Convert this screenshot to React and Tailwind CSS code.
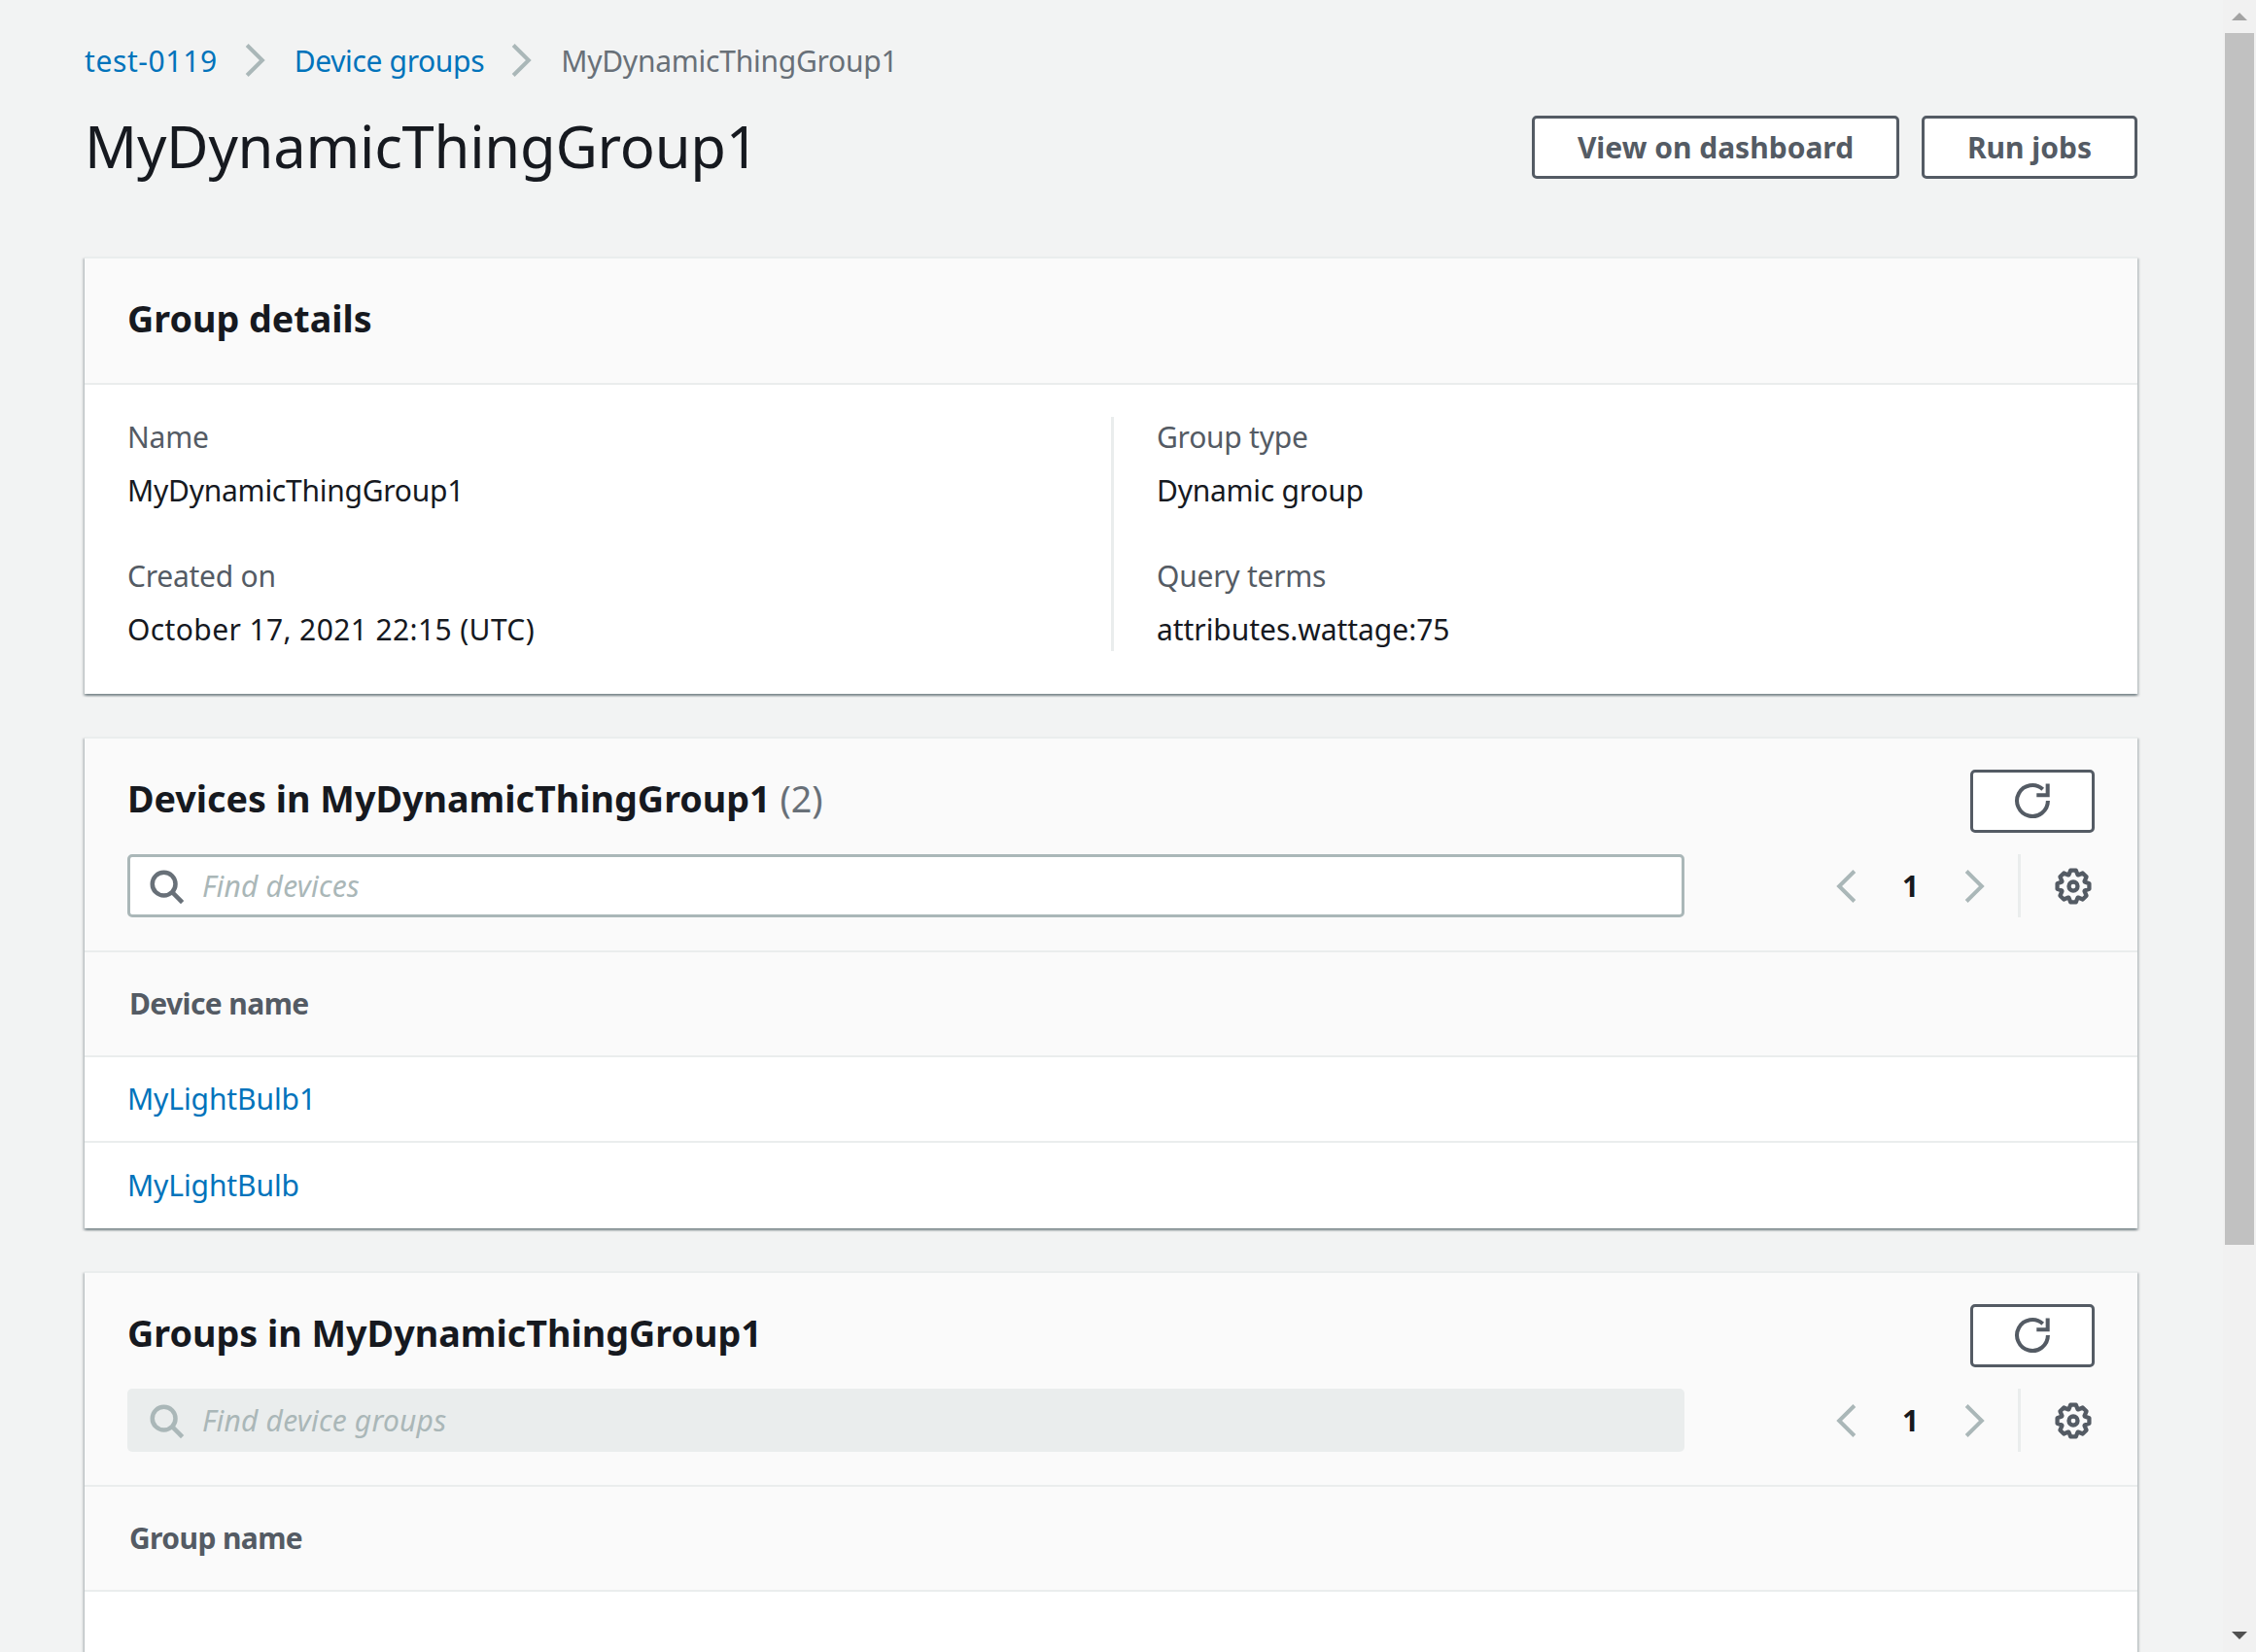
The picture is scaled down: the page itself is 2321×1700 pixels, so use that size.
const gearPath = (() => {
  const teeth = 8;
  const pts = [];
  for (let i = 0; i < teeth; i++) {
    const a = (i / teeth) * Math.PI * 2 - Math.PI / 2;
    const w = Math.PI / teeth;
    [[-w * 0.95, 5.3], [-w * 0.42, 7], [w * 0.42, 7], [w * 0.95, 5.3]].forEach(([d, r]) => {
      pts.push(`${(8 + Math.cos(a + d) * r).toFixed(2)} ${(8 + Math.sin(a + d) * r).toFixed(2)}`);
    });
  }
  return "M" + pts.join("L") + "Z";
})();

function Icon({ className = "", children }) {
  return (
    <svg viewBox="0 0 16 16" fill="none" stroke="currentColor" strokeWidth="1.7" className={`w-[38px] h-[38px] shrink-0 ${className}`}>
      {children}
    </svg>
  );
}
const ChevronRight = ({ className }) => <Icon className={className}><path d="M4.7 1.5L11.3 8l-6.6 6.5" /></Icon>;
const ChevronLeft = ({ className }) => <Icon className={className}><path d="M11.3 1.5L4.7 8l6.6 6.5" /></Icon>;
const Refresh = () => (
  <Icon className="text-[#545b64]">
    <path d="M14.6 0.6V5.6H9.8" />
    <path d="M12.5 3.05A6.7 6.7 0 1 0 14.7 8" />
  </Icon>
);
const Gear = () => (
  <Icon className="text-[#545b64]">
    <path d={gearPath} strokeLinejoin="round" strokeWidth="1.8" />
    <circle cx="8" cy="8" r="1.9" strokeWidth="1.8" />
  </Icon>
);
const Search = ({ className }) => (
  <Icon className={className}>
    <circle cx="7" cy="7" r="5" strokeWidth="1.9" />
    <path d="M10.7 10.7L15 15" strokeWidth="1.9" />
  </Icon>
);

function Btn({ children, className = "" }) {
  return (
    <button className={`h-[65px] border-[3px] border-[#545b64] rounded-[5px] bg-white text-[#545b64] font-bold tracking-normal flex items-center justify-center ${className}`}>
      {children}
    </button>
  );
}

function Field({ label, value, valueClass = "" }) {
  return (
    <div className="flex flex-col">
      <div className="h-[36px] leading-[36px] text-[#545b64]">{label}</div>
      <div className={`h-[36px] leading-[36px] mt-[19px] text-[#16191f] ${valueClass}`}>{value}</div>
    </div>
  );
}

function Pager() {
  return (
    <div className="flex items-center mr-[3px]">
      <ChevronLeft className="text-[#aab7b8]" />
      <div className="w-[93px] text-center font-bold text-[#16191f]">1</div>
      <ChevronRight className="text-[#aab7b8]" />
      <div className="w-[3px] h-[65px] bg-[#eaeded] ml-[26px] mr-[35px]" />
      <Gear />
    </div>
  );
}

function TableCard({ title, count, placeholder, disabled, column, rows }) {
  return (
    <section className="bg-white border-t-2 border-[#eaeded] shadow-[0_2px_2px_0_rgba(0,28,36,0.3),2px_2px_2px_0_rgba(0,28,36,0.15),-2px_2px_2px_0_rgba(0,28,36,0.15)]">
      <div className="bg-[#fafafa] px-[44px] pt-[31px] pb-[34px] border-b-2 border-[#eaeded]">
        <div className="flex items-center justify-between h-[66px]">
          <h2 className="text-[37.7px] pb-[3px] font-bold tracking-normal text-[#16191f]">
            {title}
            {count && <span className="font-normal text-[#687078]"> {count}</span>}
          </h2>
          <Btn className="w-[128px]"><Refresh /></Btn>
        </div>
        <div className="flex items-center justify-between mt-[22px]">
          <div className={`w-[1602px] h-[65px] rounded-[5px] flex items-center ${disabled ? "pl-[21px] bg-[#eaeded]" : "pl-[18px] bg-white border-[3px] border-[#aab7b8]"}`}>
            <Search className={disabled ? "text-[#aab7b8]" : "text-[#687078]"} />
            <span className="ml-[18px] italic tracking-[0.2px] text-[#aab7b8]">{placeholder}</span>
          </div>
          <Pager />
        </div>
      </div>
      <div className="bg-[#fafafa] h-[108px] pb-[2px] flex items-center px-[46px] font-bold tracking-[-0.6px] text-[#545b64] border-b-2 border-[#eaeded]">
        {column}
      </div>
      {rows.map((r, i) => (
        <div key={r} className={`h-[88px] pb-[2px] flex items-center px-[44px] tracking-[-0.1px] text-[#0073bb] ${i < rows.length - 1 ? "border-b-2 border-[#eaeded]" : ""}`}>
          {r}
        </div>
      ))}
    </section>
  );
}

function Scrollbar() {
  return (
    <div className="w-[34px] h-full bg-[#f1f1f1] flex flex-col items-center shrink-0">
      <div className="h-[34px] flex items-center justify-center">
        <div className="w-0 h-0 border-x-[8px] border-x-transparent border-b-[8px] border-b-[#a3a3a3]" />
      </div>
      <div className="w-[30px] h-[1247px] bg-[#c1c1c1]" />
      <div className="flex-1 flex items-end justify-center pb-[13px]">
        <div className="w-0 h-0 border-x-[8px] border-x-transparent border-t-[8px] border-t-[#505050]" />
      </div>
    </div>
  );
}

export default function App() {
  return (
    <div className="w-[2321px] h-[1700px] overflow-hidden flex bg-[#f2f3f3] text-[30px] tracking-[-0.25px] font-['Noto_Sans',sans-serif]">
      <main className="flex-1 pl-[87px] pr-[88px] h-full overflow-hidden">
        <nav className="flex items-center pt-[43px] pb-[2px] h-[83px] text-[#0073bb]">
          <span className="tracking-[0.6px]">test-0119</span>
          <ChevronRight className="text-[#aab7b8] ml-[19px] mr-[22px]" />
          <span className="tracking-[-0.35px]">Device groups</span>
          <ChevronRight className="text-[#aab7b8] ml-[19px] mr-[22px]" />
          <span className="text-[#687078]">MyDynamicThingGroup1</span>
        </nav>
        <header className="flex items-center justify-between mt-[36px] mb-[80px] h-[65px]">
          <h1 className="text-[59.7px] pb-[4px] text-[#16191f]">MyDynamicThingGroup1</h1>
          <div className="flex gap-[23px]">
            <Btn className="w-[378px]">View on dashboard</Btn>
            <Btn className="w-[222px]">Run jobs</Btn>
          </div>
        </header>
        <div className="flex flex-col gap-[44px]">
          <section className="bg-white border-t-2 border-[#eaeded] shadow-[0_2px_2px_0_rgba(0,28,36,0.3),2px_2px_2px_0_rgba(0,28,36,0.15),-2px_2px_2px_0_rgba(0,28,36,0.15)]">
            <div className="h-[130px] pb-[3px] bg-[#fafafa] px-[44px] flex items-center border-b-2 border-[#eaeded]">
              <h2 className="text-[37.7px] font-bold tracking-normal text-[#16191f]">Group details</h2>
            </div>
            <div className="grid grid-cols-2 pt-[33px] pb-[44px]">
              <div className="pl-[44px] pt-[3px] pb-[4px] flex flex-col gap-[52px] w-[1057px]">
                <Field label="Name" value="MyDynamicThingGroup1" />
                <Field label="Created on" value="October 17, 2021 22:15 (UTC)" valueClass="tracking-[0.38px]" />
              </div>
              <div className="pl-[44px] pt-[3px] pb-[4px] flex flex-col gap-[52px] border-l-[3px] border-[#eaeded]">
                <Field label="Group type" value="Dynamic group" />
                <Field label="Query terms" value="attributes.wattage:75" valueClass="tracking-[-0.05px]" />
              </div>
            </div>
          </section>
          <TableCard title="Devices in MyDynamicThingGroup1" count="(2)" placeholder="Find devices" column="Device name" rows={["MyLightBulb1", "MyLightBulb"]} />
          <TableCard title="Groups in MyDynamicThingGroup1" placeholder="Find device groups" disabled column="Group name" rows={[""]} />
        </div>
      </main>
      <Scrollbar />
    </div>
  );
}
